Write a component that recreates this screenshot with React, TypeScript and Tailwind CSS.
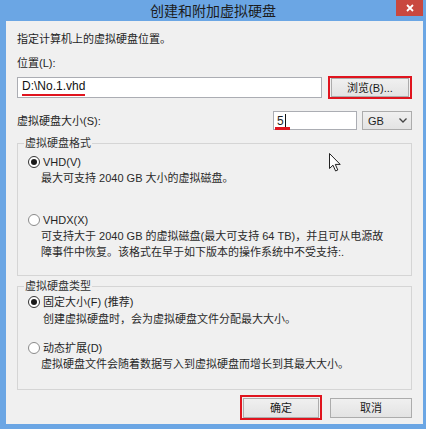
import React from "react";

function Radio({ checked }: { checked?: boolean }) {
  return (
    <span
      className={
        "flex h-[12px] w-[12px] shrink-0 items-center justify-center rounded-full border bg-white " +
        (checked ? "border-[#333333]" : "border-[#8a8a8a]")
      }
    >
      {checked && <span className="h-[6px] w-[6px] rounded-full bg-[#1a1a1a]" />}
    </span>
  );
}

function Button({ label, className }: { label: string; className: string }) {
  return (
    <div
      className={
        "flex items-center justify-center border border-[#acacac] bg-gradient-to-b from-[#f0f0f0] to-[#e3e3e3] text-[11px] text-[#1a1a1a] " +
        className
      }
    >
      {label}
    </div>
  );
}

export default function App() {
  return (
    <div className="flex h-[429px] w-[426px] flex-col bg-[#6ba6e4] font-['Liberation_Sans','Noto_Sans_CJK_SC',sans-serif] text-[11px] leading-[16px] text-[#1f1f1f]">
      {/* title bar */}
      <div className="grid h-[21px] shrink-0 grid-cols-[1fr_auto_1fr]">
        <div />
        <div className="flex items-center text-[14px] text-[#1c1c1c]">创建和附加虚拟硬盘</div>
        <div className="flex justify-end pr-[3px]">
          <div className="flex h-[16px] w-[27px] items-center justify-center bg-[#c9483f]">
            <svg width="8" height="8" viewBox="0 0 8 8">
              <path d="M1 1 L7 7 M7 1 L1 7" stroke="white" strokeWidth="1.8" />
            </svg>
          </div>
        </div>
      </div>

      {/* body */}
      <div className="relative mb-[5px] ml-[6px] mr-[3px] flex-1 bg-[#f0f0f0] px-[11px] pt-[10px]">
        <div>指定计算机上的虚拟硬盘位置。</div>
        <div className="mt-[8px]">位置(L):</div>

        <div className="mt-[5px] flex items-center gap-[6px]">
          <div className="flex h-[21px] flex-1 items-center border border-[#abadb3] bg-white pl-[4px]">
            <span className="border-b-2 border-[#e0141e] text-[12px] leading-[15px] text-[#111]">
              D:\No.1.vhd
            </span>
          </div>
          <div className="flex h-[23px] w-[84px] items-center justify-center border-2 border-[#e0141e]">
            <Button label="浏览(B)..." className="h-[19px] w-[78px]" />
          </div>
        </div>

        <div className="mt-[12px] flex h-[19px] items-center gap-[5px]">
          <div className="flex-1">虚拟硬盘大小(S):</div>
          <div className="relative flex h-[19px] w-[84px] items-center border border-[#abadb3] bg-white pl-[3px] text-[12px]">
            <span>5</span>
            <span className="ml-[1px] h-[13px] w-[1px] bg-[#111]" />
            <span className="absolute bottom-[-1px] left-[1px] h-[3px] w-[15px] bg-[#e0141e]" />
          </div>
          <div className="flex h-[19px] w-[50px] items-center justify-between border border-[#acacac] bg-gradient-to-b from-[#f0f0f0] to-[#e3e3e3] pl-[5px] pr-[4px] text-[11px]">
            <span>GB</span>
            <svg width="8" height="5" viewBox="0 0 8 5">
              <path d="M0.5 0.5 L4 4 L7.5 0.5" stroke="#444" strokeWidth="1.3" fill="none" />
            </svg>
          </div>
        </div>

        <fieldset className="mt-[5px] border border-[#d5d5d5] pb-[15px] pl-[10px]">
          <legend className="ml-[-4px] px-[1px] text-[#333]">虚拟硬盘格式</legend>
          <div className="mt-[3px] flex items-center gap-[3px]">
            <Radio checked />
            <span>VHD(V)</span>
          </div>
          <div className="ml-[13px] text-[#2a2a2a]">最大可支持 2040 GB 大小的虚拟磁盘。</div>
          <div className="mt-[26px] flex items-center gap-[3px]">
            <Radio />
            <span>VHDX(X)</span>
          </div>
          <div className="ml-[13px] whitespace-nowrap text-[#2a2a2a]">
            可支持大于 2040 GB 的虚拟磁盘(最大可支持 64 TB)，并且可从电源故
            <br />
            障事件中恢复。该格式在早于如下版本的操作系统中不受支持:.
          </div>
        </fieldset>

        <fieldset className="mt-[2px] border border-[#d5d5d5] pb-[17px] pl-[10px]">
          <legend className="ml-[-4px] px-[1px] text-[#333]">虚拟硬盘类型</legend>
          <div className="flex items-center gap-[3px]">
            <Radio checked />
            <span>固定大小(F) (推荐)</span>
          </div>
          <div className="ml-[15px] mt-[1px] text-[#2a2a2a]">创建虚拟硬盘时，会为虚拟硬盘文件分配最大大小。</div>
          <div className="mt-[13px] flex items-center gap-[3px]">
            <Radio />
            <span>动态扩展(D)</span>
          </div>
          <div className="ml-[13px] text-[#2a2a2a]">虚拟硬盘文件会随着数据写入到虚拟硬盘而增长到其最大大小。</div>
        </fieldset>

        <div className="mt-[5px] flex items-center justify-end gap-[8px]">
          <div className="flex h-[25px] w-[82px] items-center justify-center border-2 border-[#e0141e]">
            <Button label="确定" className="h-[20px] w-[76px]" />
          </div>
          <Button label="取消" className="h-[20px] w-[82px]" />
        </div>

        {/* mouse pointer */}
        <svg
          className="absolute left-[323px] top-[132px]"
          width="13"
          height="19"
          viewBox="0 0 13 19"
        >
          <path
            d="M0.5 0.5 L0.5 15.5 L4 12.2 L6.6 18 L8.8 17 L6.3 11.4 L11.2 11.4 Z"
            fill="white"
            stroke="#222"
            strokeWidth="1"
            strokeLinejoin="round"
          />
        </svg>
      </div>
    </div>
  );
}
